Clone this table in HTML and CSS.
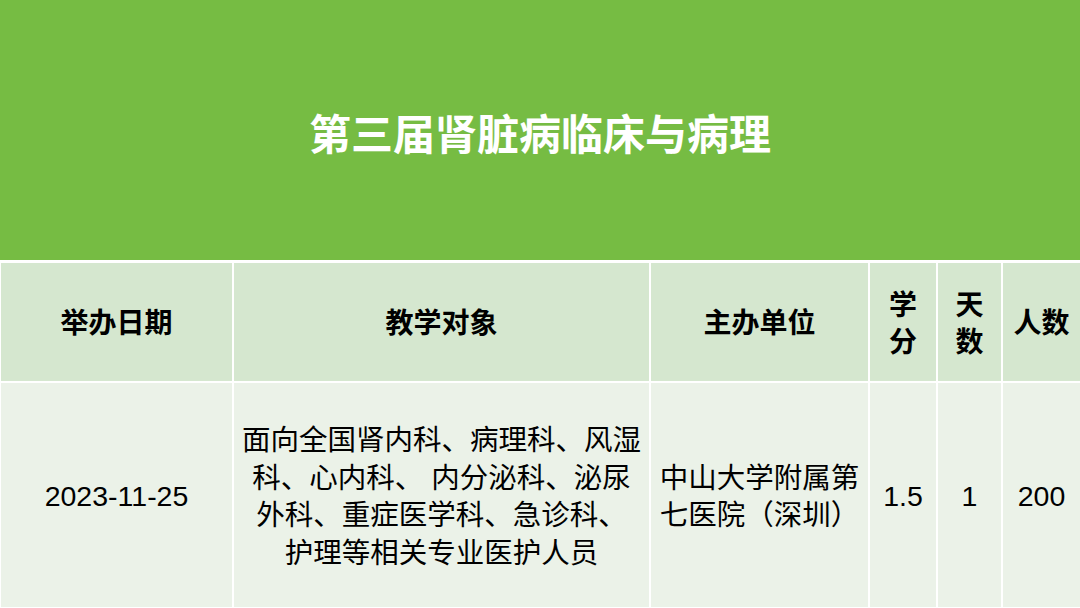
FILE: index.html
```html
<!DOCTYPE html>
<html lang="zh-CN">
<head>
<meta charset="utf-8">
<title>第三届肾脏病临床与病理</title>
<link rel="stylesheet" href="styles.css">
</head>
<body>
<div class="page">
  <header class="banner">
    <h1 class="title">第三届肾脏病临床与病理</h1>
  </header>
  <div class="table">
    <div class="cell head">举办日期</div>
    <div class="cell head">教学对象</div>
    <div class="cell head">主办单位</div>
    <div class="cell head narrow">学<br>分</div>
    <div class="cell head narrow">天<br>数</div>
    <div class="cell head">人数</div>

    <div class="cell body">2023-11-25</div>
    <div class="cell body">面向全国肾内科、病理科、风湿<br>科、心内科、 内分泌科、泌尿<br>外科、重症医学科、急诊科、<br>护理等相关专业医护人员</div>
    <div class="cell body">中山大学附属第<br>七医院（深圳）</div>
    <div class="cell body">1.5</div>
    <div class="cell body">1</div>
    <div class="cell body">200</div>
  </div>
</div>
</body>
</html>
```

FILE: styles.css
```css
* { box-sizing: border-box; }
html, body {
  margin: 0;
  padding: 0;
  background: #ffffff;
}
body {
  font-family: "Liberation Sans", "Noto Sans CJK SC", sans-serif;
  color: #000;
}
.page {
  width: 1080px;
  height: 608px;
  overflow: hidden;
  background: #ffffff;
}
.banner {
  height: 260px;
  background: #76bc43;
  display: flex;
  align-items: center;
  justify-content: center;
}
.title {
  margin: 0;
  color: #ffffff;
  font-family: "Noto Sans CJK SC", sans-serif;
  font-weight: 700;
  font-size: 42px;
  line-height: 1;
  padding-top: 4px;
}
.table {
  margin-top: 3px;
  padding-left: 1px;
  display: grid;
  grid-template-columns: 231px 415px 217px 66px 63px 1fr;
  grid-template-rows: 118px 224px;
  gap: 2px;
}
.cell {
  display: flex;
  align-items: center;
  justify-content: center;
  text-align: center;
  font-size: 28px;
  line-height: 37.5px;
}
.head {
  background: #d5e7cf;
  font-family: "Noto Sans CJK SC", sans-serif;
  font-weight: 700;
}
.body {
  background: #ebf2e8;
  padding-top: 4px;
  font-size: 28.5px;
}
```
